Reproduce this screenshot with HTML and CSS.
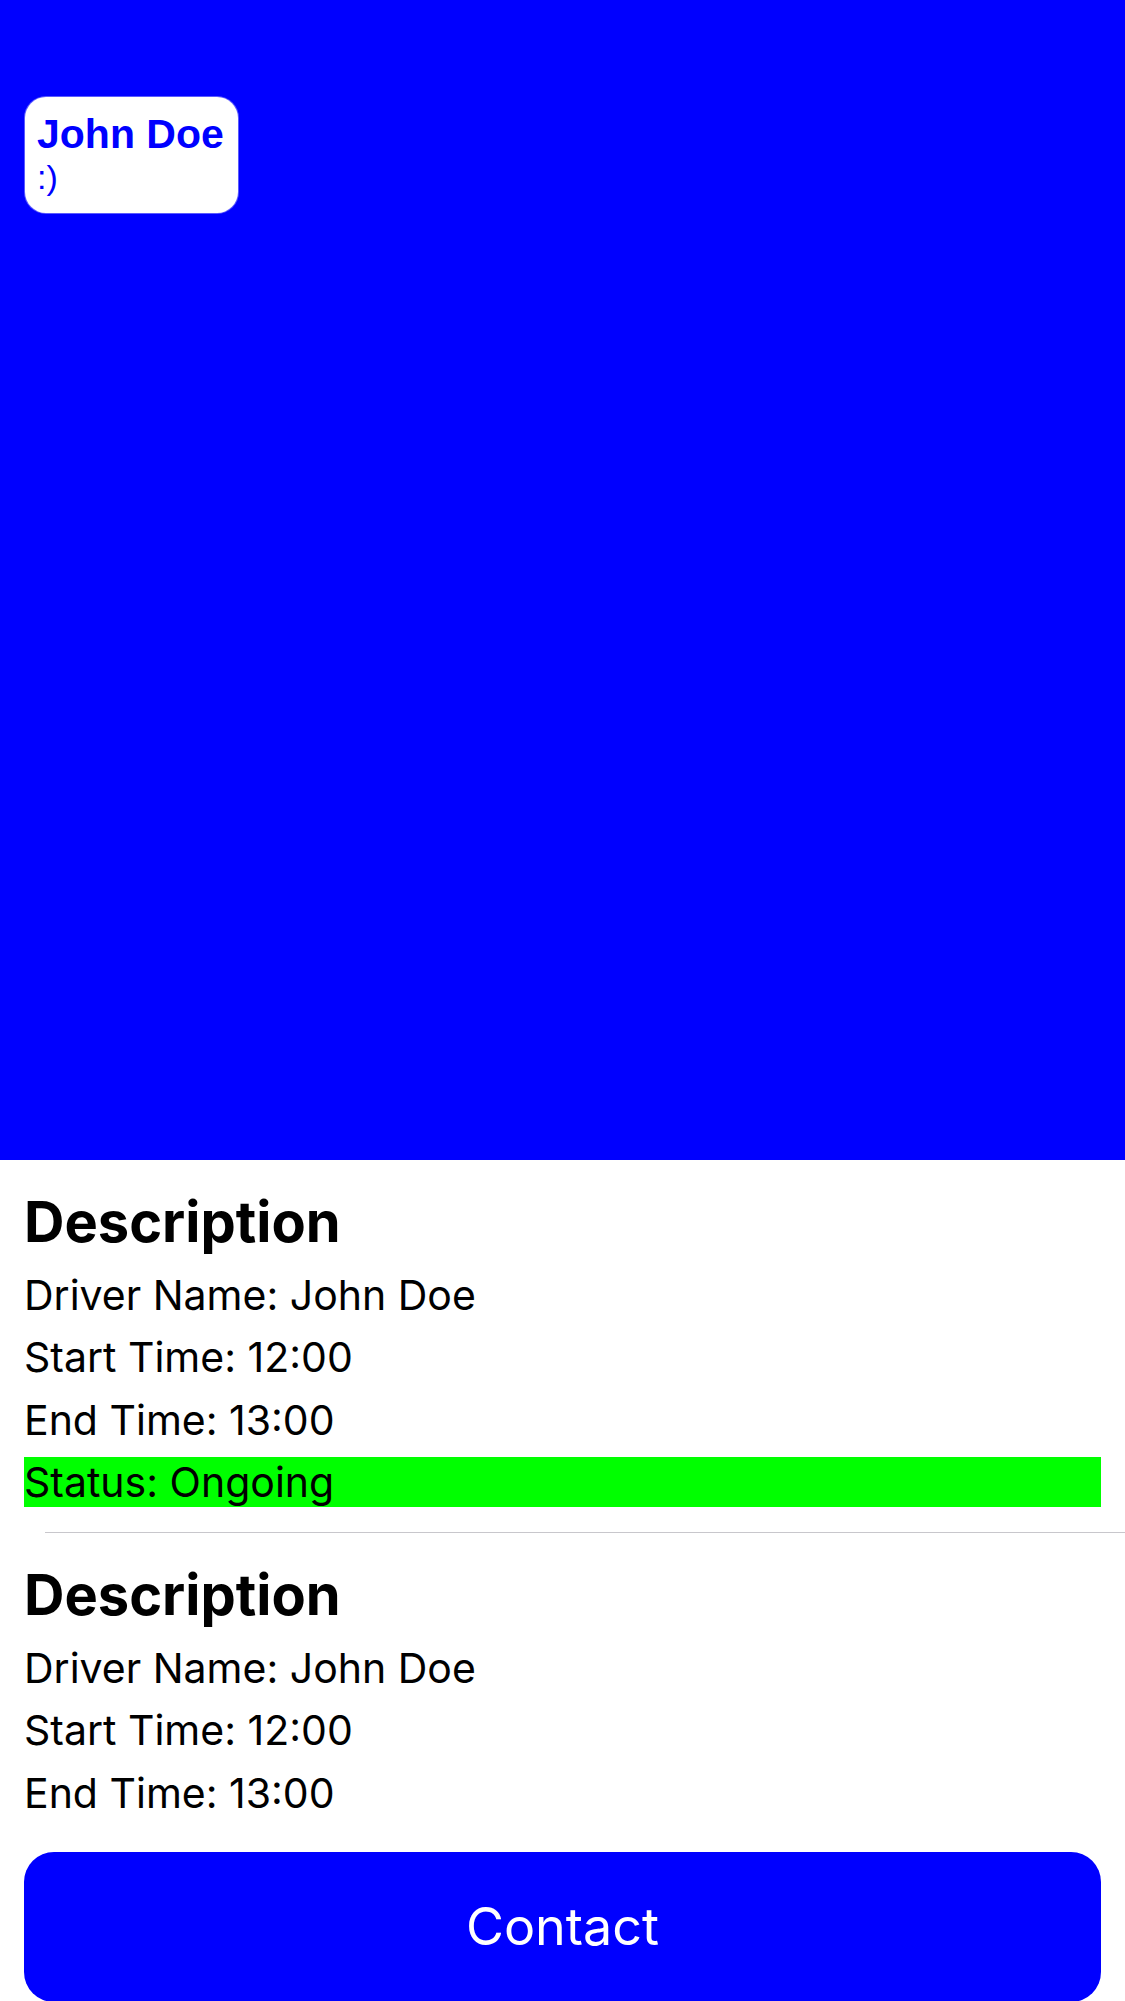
FILE: index.html
```html
<!DOCTYPE html>
<html>
<head>
<meta charset="utf-8">
<link rel="stylesheet" href="styles.css">
</head>
<body>
<div class="screen">
  <div class="map">
    <div class="callout">
      <div class="callout-title">John Doe</div>
      <div class="callout-sub">:)</div>
    </div>
  </div>
  <div class="cell">
    <div class="cell-title">Description</div>
    <div class="cell-line">Driver Name: John Doe</div>
    <div class="cell-line">Start Time: 12:00</div>
    <div class="cell-line">End Time: 13:00</div>
    <div class="cell-line status">Status: Ongoing</div>
  </div>
  <div class="separator"></div>
  <div class="cell">
    <div class="cell-title">Description</div>
    <div class="cell-line">Driver Name: John Doe</div>
    <div class="cell-line">Start Time: 12:00</div>
    <div class="cell-line">End Time: 13:00</div>
  </div>
  <div class="contact">Contact</div>
</div>
</body>
</html>
```
FILE: styles.css
```css
html, body {
  margin: 0;
  padding: 0;
  background: #ffffff;
}
body {
  width: 1125px;
  height: 2001px;
  overflow: hidden;
  font-family: "Inter", "Noto Sans", sans-serif;
  color: #000000;
}
.screen {
  display: flex;
  flex-direction: column;
}
.map {
  height: 1160px;
  box-sizing: border-box;
  background: #0000ff;
  padding: 97px 0 0 25px;
  display: flex;
  align-items: flex-start;
}
.callout {
  background: #ffffff;
  border-radius: 21px;
  padding: 15px 14px 16px 12px;
  color: #0000ff;
  font-family: "Liberation Sans", Arial, sans-serif;
  box-shadow: 0 0 0 1px rgba(200, 200, 255, 0.45);
}
.callout-title {
  font-size: 41px;
  font-weight: bold;
  line-height: 44px;
}
.callout-sub {
  font-size: 34px;
  line-height: 40px;
  margin-top: 1px;
}
.cell {
  padding: 30px 24px 25px 24px;
  display: flex;
  flex-direction: column;
  gap: 12.5px;
}
.cell-title {
  font-size: 56px;
  font-weight: 700;
  line-height: 64px;
  margin-bottom: 3px;
}
.cell-line {
  font-size: 41px;
  line-height: 50px;
  height: 50px;
}
.status {
  background: #00ff00;
}
.separator {
  height: 1px;
  margin-left: 45px;
  background: #c8c7cc;
}
.contact {
  margin: 9px 24px 0 24px;
  height: 150px;
  border-radius: 30px;
  background: #0000ff;
  color: #ffffff;
  font-size: 52px;
  display: flex;
  align-items: center;
  justify-content: center;
}
```
